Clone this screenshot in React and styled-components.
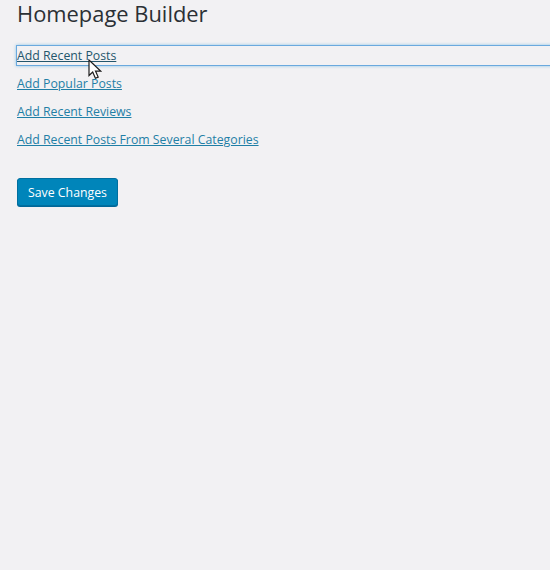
import React from "react";
import styled, { createGlobalStyle } from "styled-components";

const GlobalStyle = createGlobalStyle`
  html, body {
    margin: 0;
    height: 100%;
    background: #f2f1f3;
    overflow: hidden;
  }
  body {
    font-family: "Open Sans", "Noto Sans", sans-serif;
    font-size: 13px;
    color: #23282d;
  }
`;

const links = [
  "Add Popular Posts",
  "Add Recent Reviews",
  "Add Recent Posts From Several Categories",
];

const App = () => {
  return (
    <>
      <GlobalStyle />
      <Wrap>
        <Title>Homepage Builder</Title>
        <LinkList>
          <FocusRow>
            <RowLink href="#" $focused>
              Add Recent Posts
            </RowLink>
            <Cursor viewBox="0 0 14 21" aria-hidden="true">
              <path
                d="M1 1v15.5l3.7-3.5 2.7 6.3 2.8-1.2-2.7-6h5.1z"
                fill="#fff"
                stroke="#1c1c1c"
                strokeWidth="1.2"
              />
            </Cursor>
          </FocusRow>
          {links.map((text) => (
            <RowLink href="#" key={text}>
              {text}
            </RowLink>
          ))}
        </LinkList>
        <SaveButton type="button">Save Changes</SaveButton>
      </Wrap>
    </>
  );
};

export default App;

const Wrap = styled.div`
  padding-left: 17px;
`;

const Title = styled.h1`
  margin: 0 0 19px;
  font-size: 21.9px;
  font-weight: 400;
  line-height: 27px;
  height: 27px;
  color: #2b3035;
`;

const LinkList = styled.div`
  display: flex;
  flex-direction: column;
  gap: 8px;
`;

const FocusRow = styled.div`
  position: relative;
  margin-right: -10px;
  height: 20px;
`;

const RowLink = styled.a`
  display: block;
  height: ${(p) => (p.$focused ? "19px" : "20px")};
  line-height: 20px;
  font-size: 12.3px;
  color: ${(p) => (p.$focused ? "#24566c" : "#1f7fa6")};
  text-decoration: underline;
  box-shadow: ${(p) =>
    p.$focused
      ? "0 0 0 1px #6aa9de, 0 0 3px 1px rgba(60, 160, 220, 0.55)"
      : "none"};
`;

const Cursor = styled.svg`
  position: absolute;
  left: 71px;
  top: 13px;
  width: 14px;
  height: 21px;
`;

const SaveButton = styled.button`
  display: block;
  margin-top: 28px;
  width: 101px;
  height: 28px;
  padding: 0;
  font-family: inherit;
  font-size: 12.3px;
  color: #fff;
  background: #0085ba;
  border: 1px solid #006f9f;
  border-radius: 3px;
  box-shadow: 0 1px 0 #006799;
`;
